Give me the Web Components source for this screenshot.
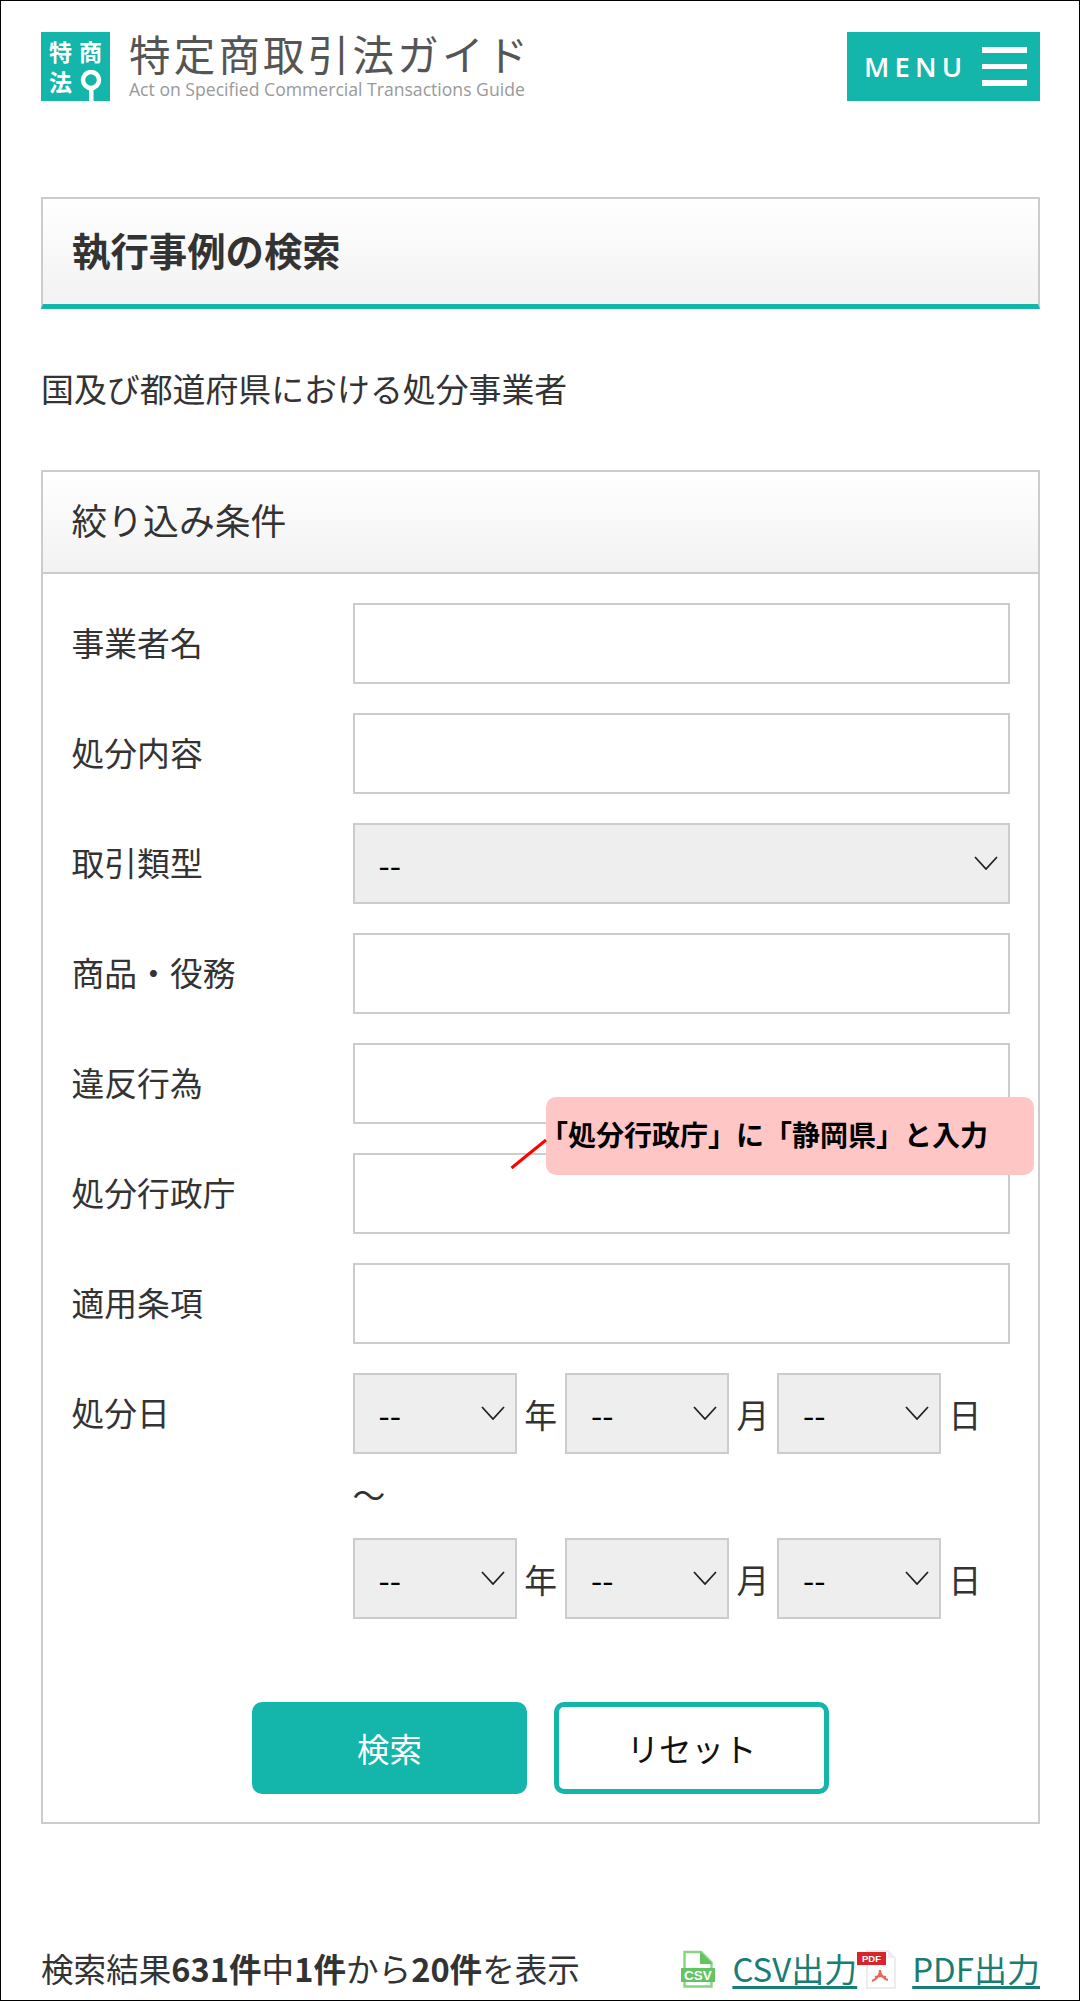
<!DOCTYPE html>
<html lang="ja">
<head>
<meta charset="utf-8">
<title>執行事例の検索</title>
<style>
html,body{margin:0;padding:0;background:#fff}
body{font-family:"Noto Sans CJK JP","Noto Sans",sans-serif;color:#333;font-size:33px}
</style>
</head>
<body>
<app-page>
  <site-header></site-header>
  <page-title>執行事例の検索</page-title>
  <lead-text>国及び都道府県における処分事業者</lead-text>
  <filter-panel heading="絞り込み条件">
    <filter-row label="事業者名"><text-field></text-field></filter-row>
    <filter-row label="処分内容"><text-field></text-field></filter-row>
    <filter-row label="取引類型"><select-field></select-field></filter-row>
    <filter-row label="商品・役務"><text-field></text-field></filter-row>
    <filter-row label="違反行為"><text-field></text-field></filter-row>
    <filter-row label="処分行政庁"><text-field></text-field></filter-row>
    <filter-row label="適用条項"><text-field></text-field></filter-row>
    <filter-row label="処分日"><date-range></date-range></filter-row>
    <action-bar slot="actions">
      <action-button kind="primary">検索</action-button>
      <action-button kind="outline">リセット</action-button>
    </action-bar>
    <call-out slot="overlay">「処分行政庁」に「静岡県」と入力</call-out>
  </filter-panel>
  <result-bar></result-bar>
</app-page>
<script>
function def(name, html){
  customElements.define(name, class extends HTMLElement{
    connectedCallback(){
      if(this.shadowRoot) return;
      const r=this.attachShadow({mode:'open'});
      r.innerHTML=typeof html==='function'?html(this):html;
    }
  });
}
def('app-page',`<style>
:host{display:block;box-sizing:border-box;width:1080px;height:2001px;border:1px solid #000;padding:31px 39px 0 40px;overflow:hidden}
</style><slot></slot>`);

def('site-header',`<style>
:host{display:flex;justify-content:space-between;align-items:flex-start;height:69px}
.brand{display:flex;gap:19px}
.mark{width:69px;height:69px;background:#14b5aa;color:#fff;box-sizing:border-box;padding:7px 8px 0 8px;display:grid;grid-template-columns:30px 23px;grid-auto-rows:30px;font-size:23px;line-height:25px;font-weight:700;position:relative}
.mark svg{position:absolute;left:39px;top:38px}
.names{display:flex;flex-direction:column}
.jp{font-size:41.5px;line-height:42px;letter-spacing:3.2px;color:#555;font-weight:400;height:46px;white-space:nowrap}
.en{font-family:"Open Sans",sans-serif;font-size:17.6px;line-height:22px;color:#999;white-space:nowrap;letter-spacing:0}
.menu{width:193px;height:69px;background:#14b5aa;display:flex;align-items:center;box-sizing:border-box;padding-left:17px;gap:15px;color:#fff;font:600 27.5px/1 "Open Sans",sans-serif;letter-spacing:5.2px}
.bars{display:flex;flex-direction:column;gap:11px;width:45px}
.bars i{display:block;height:5.5px;background:#fff}
</style>
<div class="brand">
  <div class="mark"><span>特</span><span>商</span><span>法</span>
    <svg width="30" height="31" viewBox="0 0 30 31"><circle cx="11" cy="10" r="8" fill="none" stroke="#fff" stroke-width="4.5"/><rect x="9" y="18" width="4.5" height="13" fill="#fff"/></svg>
  </div>
  <div class="names"><div class="jp">特定商取引法ガイド</div><div class="en">Act on Specified Commercial Transactions Guide</div></div>
</div>
<div class="menu"><span>MENU</span><div class="bars"><i></i><i></i><i></i></div></div>`);

def('page-title',`<style>
:host{display:flex;align-items:center;box-sizing:border-box;height:112px;margin-top:96px;padding:0 0 5px 29px;border:2px solid #ccc;border-bottom:5px solid #14b5aa;background:linear-gradient(#fff,#f2f2f2);font-size:38.4px;font-weight:700;color:#333}
</style><slot></slot>`);

def('lead-text',`<style>
:host{display:block;margin:55px 0 58px;line-height:48px;height:48px;font-size:32.9px;color:#333}
</style><slot></slot>`);

def('filter-panel',h=>`<style>
:host{display:block;position:relative;box-sizing:border-box;height:1354px;border:2px solid #ccc}
.head{box-sizing:border-box;height:102px;border-bottom:2px solid #ccc;background:linear-gradient(#fff,#f2f2f2);display:flex;align-items:center;padding:0 0 6px 28.5px;font-size:35.8px;color:#333}
.body{display:flex;flex-direction:column;gap:29px;padding:29px 28px 0 28.5px}
</style>
<div class="head">${h.getAttribute('heading')}</div>
<div class="body"><slot></slot></div>
<slot name="actions"></slot>
<slot name="overlay"></slot>`);

def('filter-row',h=>`<style>
:host{display:grid;grid-template-columns:281px 1fr}
.l{line-height:77px;font-size:32.8px;color:#333;white-space:nowrap}
</style><div class="l">${h.getAttribute('label')}</div><div><slot></slot></div>`);

def('text-field',`<style>
:host{display:block}
input{display:block;box-sizing:border-box;width:100%;height:81px;border:2px solid #ccc;background:#fff;outline:0;border-radius:0;margin:0;padding:0 24px;font:inherit}
</style><input type="text">`);

const selectCss=`
:host{display:block;position:relative}
select{display:block;appearance:none;-webkit-appearance:none;box-sizing:border-box;width:100%;height:81px;border:2px solid #ccc;border-radius:0;background:#eee;margin:0;padding:0 0 0 24px;font:32.4px "Noto Sans CJK JP",sans-serif;color:#000;outline:0}
svg{position:absolute;right:12px;top:33px;pointer-events:none}`;
def('select-field',`<style>${selectCss}</style>
<select><option>--</option></select>
<svg width="24" height="14" viewBox="0 0 24 14"><path d="M1 1 L12 13 L23 1" fill="none" stroke="#222" stroke-width="1.8"/></svg>`);

def('date-line',`<style>
:host{display:grid;grid-template-columns:164px 48.5px 164px 48px 164px 48px;align-items:center;height:81px}
span{text-align:center;font-size:32.8px;color:#333;line-height:77px}
</style>
<select-field></select-field><span>年</span>
<select-field></select-field><span>月</span>
<select-field></select-field><span>日</span>`);

def('date-range',`<style>
:host{display:block}
.tilde{height:84px;line-height:80px;font-size:32.8px;color:#333}
</style>
<date-line></date-line><div class="tilde">～</div><date-line></date-line>`);

def('action-bar',`<style>
:host{display:flex;justify-content:center;gap:27px;margin-top:83px}
</style><slot></slot>`);

def('action-button',h=>{
 const p=h.getAttribute('kind')==='primary';
 return `<style>
:host{display:flex;align-items:center;justify-content:center;box-sizing:border-box;width:275px;height:92px;padding-bottom:2px;border-radius:10px;font-size:32.4px;border:5px solid #14b5aa;background:${p?'#14b5aa':'#fff'};color:${p?'#fff':'#111'}}
</style><slot></slot>`;});

def('call-out',`<style>
:host{position:absolute;left:503px;top:625px;box-sizing:border-box;width:488px;height:78px;border-radius:10px;background:#ffc6c6;color:#000;font-size:28px;font-weight:700;line-height:74px;white-space:nowrap;text-indent:-6px}
svg{position:absolute;left:-35px;top:42px;overflow:visible}
</style>
<svg width="35" height="30" viewBox="0 0 35 30"><path d="M0.5 29 L35 1" stroke="#f00" stroke-width="3" fill="none"/></svg>
<slot></slot>`);

def('result-bar',`<style>
:host{display:flex;justify-content:space-between;align-items:center;margin-top:120px;height:48px;line-height:48px;font-size:32.6px;color:#333;white-space:nowrap}
b{font-weight:700}
.links{display:flex;align-items:center;font-size:33px}
a{color:#1a7d74;text-decoration:underline;text-decoration-thickness:2.5px;text-underline-offset:4px}
svg{display:block;flex:none;position:relative;top:1px}
.csv{margin-right:17px}
.pdf{margin-right:15px}
</style>
<div>検索結果<b>631件</b>中<b>1件</b>から<b>20件</b>を表示</div>
<div class="links">
<svg class="csv" width="34" height="38" viewBox="0 0 34 38">
  <path d="M3.5 18V2H20L30.5 12.5V18M3.5 32v4.5H30.5V32" fill="#fff" stroke="#84d484" stroke-width="2.4"/>
  <path d="M19 1.5V14H31.5Z" fill="#62c562"/>
  <rect x="0" y="18" width="34" height="14" fill="#62c562"/>
  <text x="17" y="30" text-anchor="middle" font-family="Liberation Sans" font-weight="700" font-size="13.5" fill="#fff">CSV</text>
</svg>
<a href="#">CSV出力</a>
<svg class="pdf" width="40" height="39" viewBox="0 0 40 39">
  <path d="M10 1H31L38 8V38H10Z" fill="#fff" stroke="#e8e8e8" stroke-width="1.5"/>
  <path d="M31 1V8H38Z" fill="#eee"/>
  <rect x="0" y="2" width="29" height="13" fill="#d9252a"/>
  <text x="14.5" y="12" text-anchor="middle" font-family="Liberation Sans" font-weight="700" font-size="9.5" fill="#fff">PDF</text>
  <path d="M23 20C23 25 20 29 15 31M23 20C23 25 27 29 31 30M18 27C21 26 25 26 29 27" fill="none" stroke="#e8675f" stroke-width="2"/>
</svg>
<a href="#">PDF出力</a>
</div>`);
</script>
</body>
</html>
